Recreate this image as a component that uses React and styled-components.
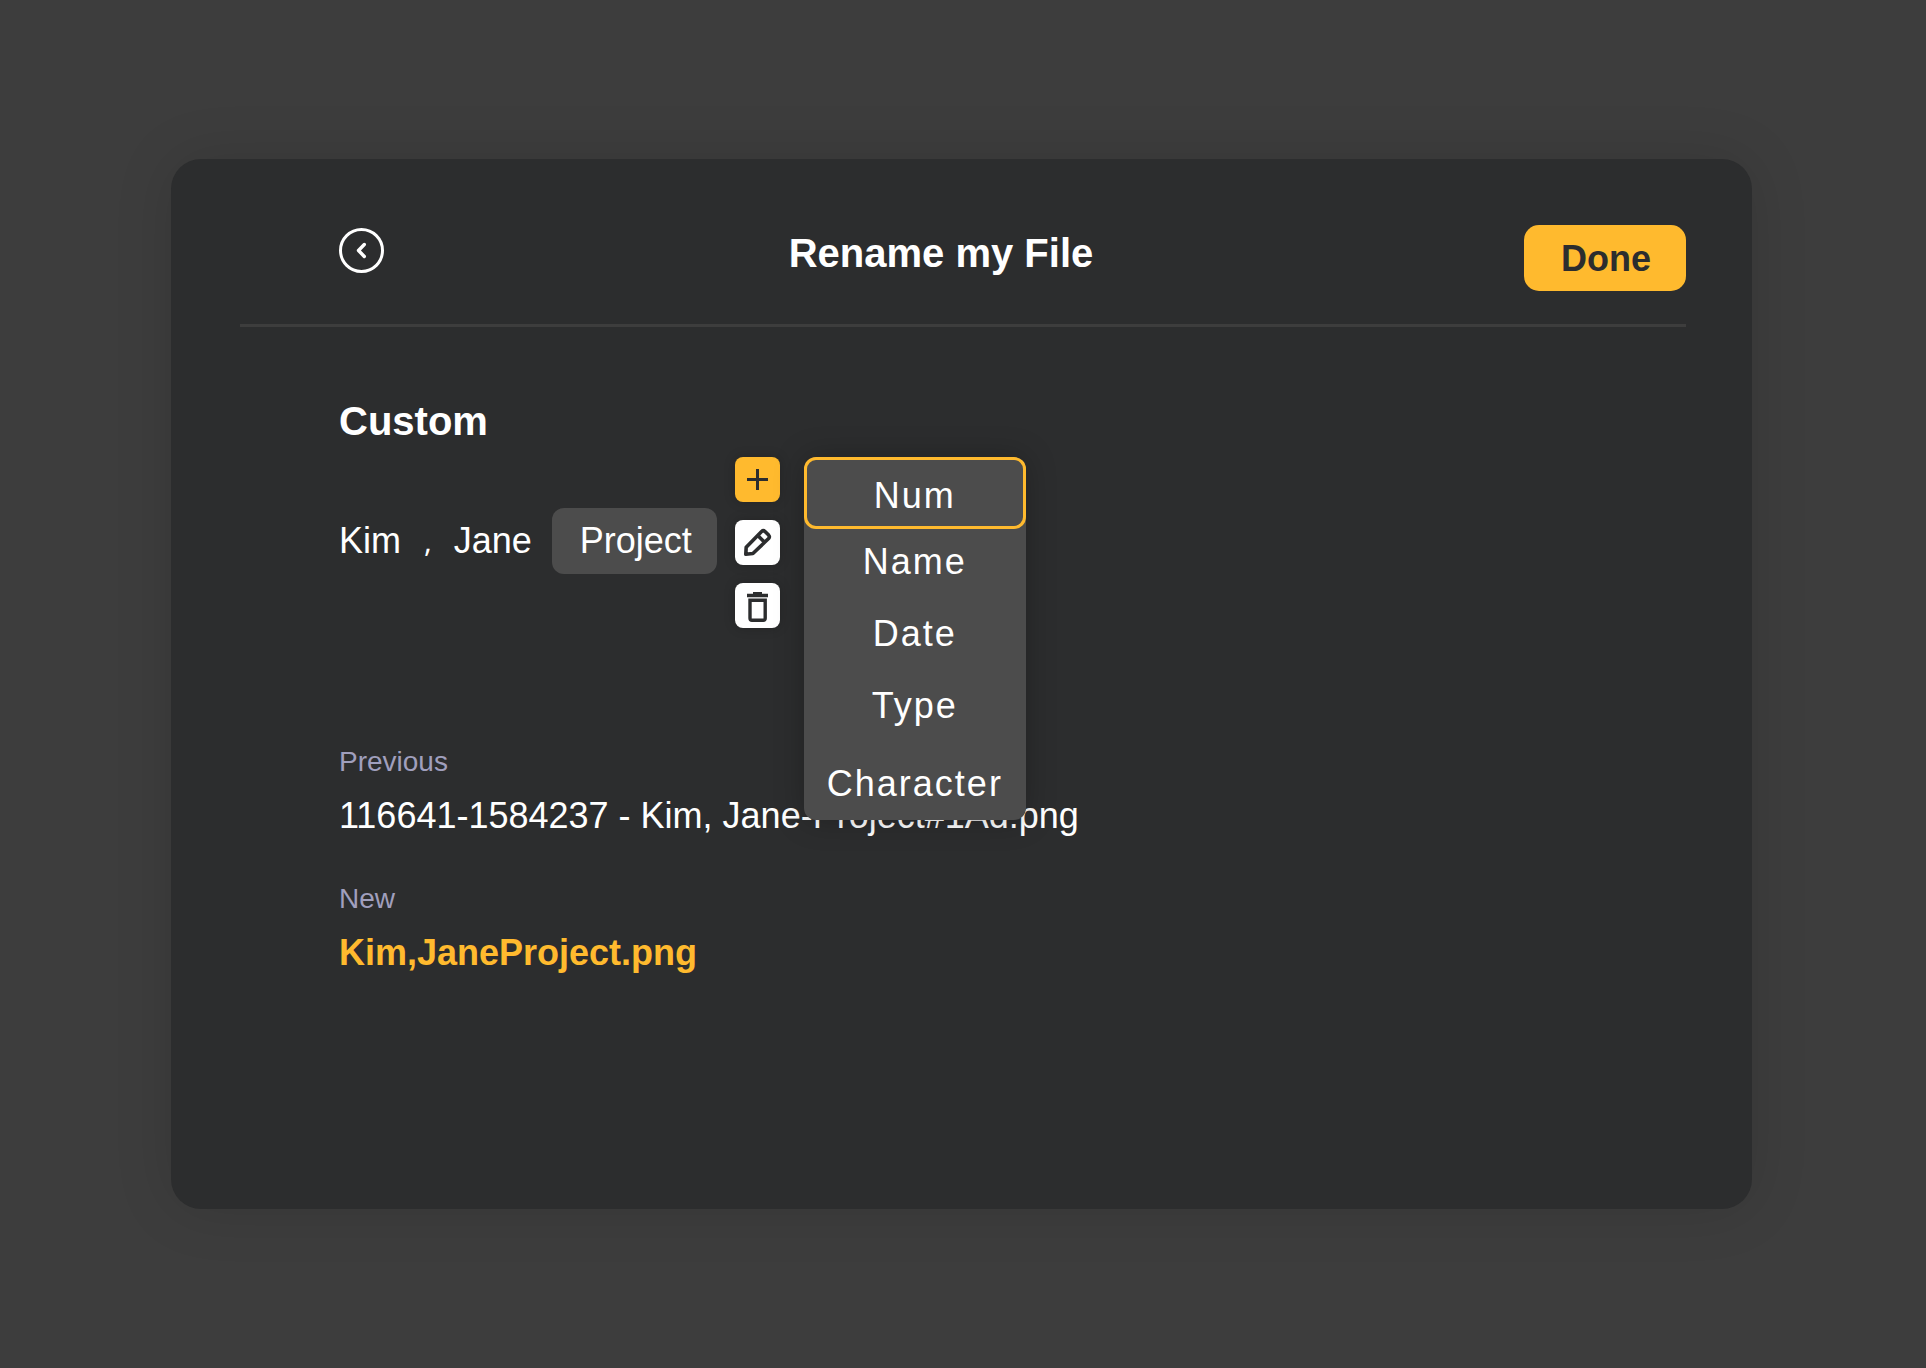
import React, { useState } from 'react';
import styled, { createGlobalStyle } from 'styled-components';

const GlobalStyle = createGlobalStyle`
  *, *::before, *::after {
    box-sizing: border-box;
  }
  body {
    margin: 0;
    background-color: #3d3d3d;
    color: #fff;
    font-family: 'Liberation Sans', Arial, sans-serif;
    font-size: 36px;
    line-height: 42px;
  }
  button {
    font: inherit;
    color: inherit;
    border: 0;
    padding: 0;
    background: none;
    cursor: pointer;
  }
`;

const Page = styled.div`
  display: flex;
  min-height: 100vh;
  padding: 159px 174px 159px 171px;
`;

const Card = styled.main`
  flex: 1;
  min-width: 0;
  padding: 66px 66px 66px 69px;
  border-radius: 30px;
  background-color: #2c2d2e;
  box-shadow: 0 0 60px rgba(0, 0, 0, 0.12);
`;

const Header = styled.header`
  display: flex;
  align-items: flex-start;
  padding: 0 0 33px 99px;
  border-bottom: 3px solid #3d3d3d;
`;

const BackButton = styled.button`
  display: flex;
  align-items: center;
  justify-content: center;
  width: 45px;
  height: 45px;
  margin-top: 3px;
  border: 3px solid #fff;
  border-radius: 50%;
`;

const Title = styled.h1`
  flex: 1;
  margin: 0;
  padding-right: 26px;
  font-size: 40px;
  line-height: 56px;
  text-align: center;
`;

const DoneButton = styled.button`
  width: 162px;
  height: 66px;
  padding: 2px 0 0 2px;
  border-radius: 15px;
  background-color: #ffba2e;
  color: #2c2d2e;
  font-weight: bold;
`;

const Body = styled.div`
  padding: 70px 0 0 99px;
`;

const SectionTitle = styled.h2`
  margin: 0 0 12px;
  font-size: 40px;
  line-height: 48px;
`;

const Editor = styled.section`
  display: flex;
  align-items: flex-start;
  gap: 18px;
`;

const Tokens = styled.div`
  display: flex;
  align-items: center;
  gap: 20px;
  height: 66px;
  margin-top: 51px;
`;

const Separator = styled.span`
  padding: 0 2px 0 3px;
  font-family: 'Open Sans', sans-serif;
  font-size: 30px;
`;

const Chip = styled.button`
  width: 165px;
  height: 66px;
  padding-left: 3px;
  border-radius: 12px;
  background-color: #4c4c4c;
`;

const Tools = styled.div`
  position: relative;
  display: flex;
  flex-direction: column;
  gap: 18px;
`;

const ToolButton = styled.button`
  display: flex;
  align-items: center;
  justify-content: center;
  width: 45px;
  height: 45px;
  border-radius: 8px;
  background-color: ${props => props.$primary ? '#ffba2e' : '#fff'};
  color: #2c2d2e;
  box-shadow: 0 0 12px rgba(0, 0, 0, 0.2);
`;

const Menu = styled.ul`
  position: absolute;
  top: 0;
  left: 69px;
  width: 222px;
  margin: 0;
  padding: 0;
  list-style: none;
  border-radius: 12px;
  background-color: #4c4c4c;
  box-shadow: 0 0 30px rgba(0, 0, 0, 0.25);
`;

const MenuItem = styled.li`
  display: flex;
  margin-bottom: ${props => props.$selected ? '12px' : '30px'};
  &:last-child {
    padding: 6px 0 15px;
    margin-bottom: 0;
  }
`;

const MenuButton = styled.button`
  flex: 1;
  letter-spacing: 2px;
  ${props => props.$selected && `
    padding: 15px 0 9px;
    border: 3px solid #ffba2e;
    border-radius: 12px;
  `}
`;

const FileNames = styled.dl`
  display: flex;
  flex-direction: column;
  gap: 45px;
  margin: 117px 0 0;
`;

const FileLabel = styled.dt`
  margin-bottom: 16px;
  color: #a09fbd;
  font-size: 28px;
  line-height: 34px;
`;

const FileValue = styled.dd`
  margin: 0;
  color: ${props => props.$fresh ? '#ffba2e' : '#fff'};
  font-weight: ${props => props.$fresh ? 'bold' : 'normal'};
`;

const BackIcon = () => (
  <svg width="39" height="39" viewBox="0 0 39 39" fill="none" stroke="currentColor" strokeWidth="3.4" strokeLinecap="round" strokeLinejoin="round" aria-hidden="true">
    <path d="M22.3 13.5 16.5 19.5l5.8 6" />
  </svg>
);

const PlusIcon = () => (
  <svg width="45" height="45" viewBox="0 0 45 45" fill="none" stroke="currentColor" strokeWidth="3" aria-hidden="true">
    <path d="M22.5 12v21M12 22.5h21" />
  </svg>
);

const PencilIcon = () => (
  <svg width="45" height="45" viewBox="0 0 45 45" fill="none" stroke="currentColor" strokeWidth="3.6" strokeLinejoin="round" aria-hidden="true">
    <path d="M10.8 34.2 11.2 27.2 26.6 11.5q1.7-1.5 3.4 0l3.6 3.6q1.5 1.7 0 3.4L17.9 33.5zM22.8 15.5l6.8 6.8" />
  </svg>
);

const TrashIcon = () => (
  <svg width="45" height="45" viewBox="0 0 45 45" fill="none" stroke="currentColor" strokeWidth="3.4" aria-hidden="true">
    <path d="M12 12.5h21M18 10.7h9" />
    <path d="M15 17.3h15.2v18q0 2-2 2H17q-2 0-2-2z" />
  </svg>
);

const options = ['Num', 'Name', 'Date', 'Type', 'Character'];

const App = () => {
  const [selected, setSelected] = useState('Num');

  return (
    <Page>
      <GlobalStyle />
      <Card>
        <Header>
          <BackButton type="button" aria-label="Back"><BackIcon /></BackButton>
          <Title>Rename my File</Title>
          <DoneButton type="button">Done</DoneButton>
        </Header>
        <Body>
          <SectionTitle>Custom</SectionTitle>
          <Editor>
            <Tokens>
              <span>Kim</span>
              <Separator>,</Separator>
              <span>Jane</span>
              <Chip type="button">Project</Chip>
            </Tokens>
            <Tools>
              <ToolButton type="button" aria-label="Add" $primary><PlusIcon /></ToolButton>
              <ToolButton type="button" aria-label="Edit"><PencilIcon /></ToolButton>
              <ToolButton type="button" aria-label="Delete"><TrashIcon /></ToolButton>
              <Menu>
                {options.map(option => (
                  <MenuItem key={option} $selected={option === selected}>
                    <MenuButton
                      type="button"
                      $selected={option === selected}
                      onClick={() => setSelected(option)}
                    >
                      {option}
                    </MenuButton>
                  </MenuItem>
                ))}
              </Menu>
            </Tools>
          </Editor>
          <FileNames>
            <div>
              <FileLabel>Previous</FileLabel>
              <FileValue>116641-1584237 - Kim, Jane-Project#1Ad.png</FileValue>
            </div>
            <div>
              <FileLabel>New</FileLabel>
              <FileValue $fresh>Kim,JaneProject.png</FileValue>
            </div>
          </FileNames>
        </Body>
      </Card>
    </Page>
  );
};

export default App;
